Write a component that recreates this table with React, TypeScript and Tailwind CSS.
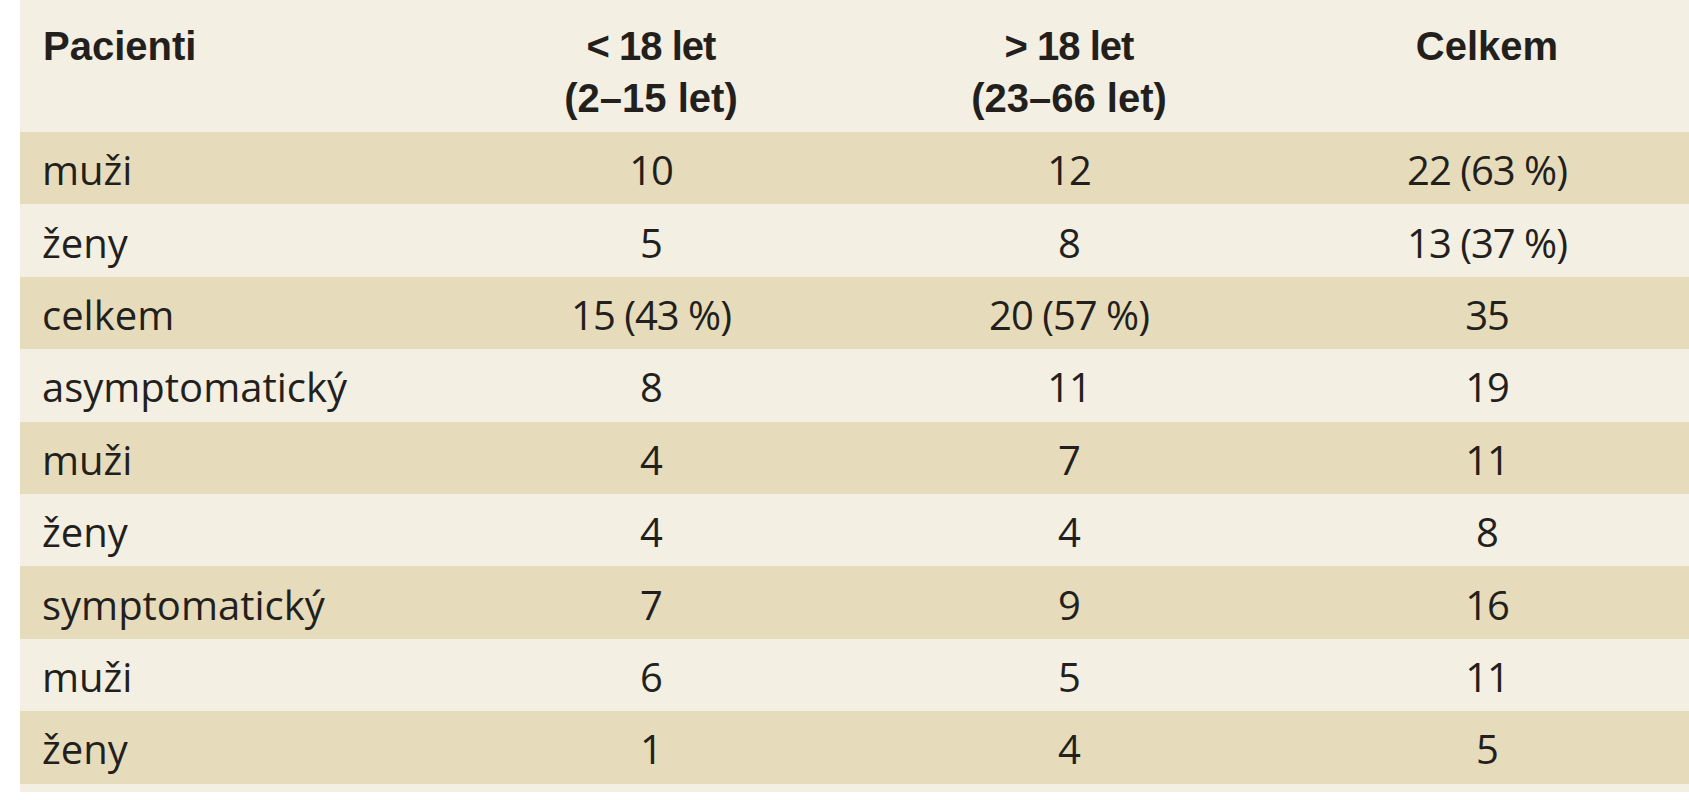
const rows: { label: string; young: string; adult: string; total: string }[] = [
  { label: 'muži', young: '10', adult: '12', total: '22 (63 %)' },
  { label: 'ženy', young: '5', adult: '8', total: '13 (37 %)' },
  { label: 'celkem', young: '15 (43 %)', adult: '20 (57 %)', total: '35' },
  { label: 'asymptomatický', young: '8', adult: '11', total: '19' },
  { label: 'muži', young: '4', adult: '7', total: '11' },
  { label: 'ženy', young: '4', adult: '4', total: '8' },
  { label: 'symptomatický', young: '7', adult: '9', total: '16' },
  { label: 'muži', young: '6', adult: '5', total: '11' },
  { label: 'ženy', young: '1', adult: '4', total: '5' },
]

export default function App() {
  return (
    <div className="h-[800px] w-[1689px] overflow-hidden bg-white">
      <div className="ml-[20px] w-[1676px] bg-[#f4efe3] pb-[8px] text-[#231f1c]">
        {/* Header */}
        <div className="grid h-[132px] grid-cols-[422px_418px_418px_418px] pt-[20px] font-['Liberation_Sans',Arial,sans-serif] text-[40px] font-bold leading-[52px]">
          <div className="pl-[23px]">Pacienti</div>
          <div className="text-center">
            <span className="tracking-[-1px]">&lt; 18 let</span>
            <br />
            (2–15 let)
          </div>
          <div className="text-center">
            <span className="tracking-[-1px]">&gt; 18 let</span>
            <br />
            (23–66 let)
          </div>
          <div className="text-center">Celkem</div>
        </div>

        {/* Body */}
        {rows.map((row, i) => (
          <div
            className={`grid h-[72.4px] grid-cols-[422px_418px_418px_418px] items-center pt-[4px] font-['Open_Sans',sans-serif] text-[40px] leading-[52px] ${
              i % 2 === 0 ? 'bg-[#e6dcbb]' : 'bg-[#f4efe3]'
            }`}
            key={i}
          >
            <div className="pl-[22px]">{row.label}</div>
            <div className="text-center tracking-[-1px]">{row.young}</div>
            <div className="text-center tracking-[-1px]">{row.adult}</div>
            <div className="text-center tracking-[-1px]">{row.total}</div>
          </div>
        ))}
      </div>
    </div>
  )
}
